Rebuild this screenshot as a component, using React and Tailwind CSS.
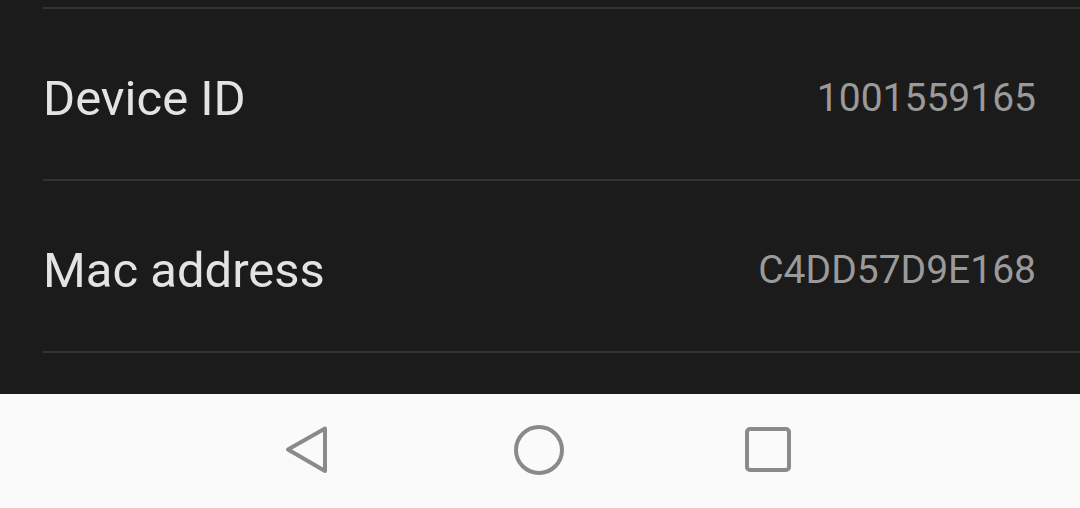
import React from "react";

const rows = [
  { label: "Device ID", value: "1001559165" },
  { label: "Mac address", value: "C4DD57D9E168" },
];

function NavBar() {
  return (
    <div className="h-[114px] bg-[#fafafa] flex items-center justify-center">
      {/* back / home / recents */}
      <div className="flex items-center -mt-[2px] pr-[4px]">
        <svg className="mr-[185px]" width="44" height="50" viewBox="0 0 44 50" fill="none">
          <path
            d="M3 24.5 L40 3.5 L40 46 Z"
            stroke="#8a8a8a"
            strokeWidth="4"
            strokeLinejoin="round"
          />
        </svg>
        <svg className="mr-[181px]" width="50" height="50" viewBox="0 0 50 50" fill="none">
          <circle cx="25" cy="25" r="23" stroke="#8a8a8a" strokeWidth="4" />
        </svg>
        <svg width="46" height="46" viewBox="0 0 46 46" fill="none">
          <rect x="2" y="2" width="42" height="41" rx="3" stroke="#8a8a8a" strokeWidth="4" />
        </svg>
      </div>
    </div>
  );
}

export default function App() {
  return (
    <div className="w-[1080px] h-[508px] overflow-hidden flex flex-col font-['Roboto',sans-serif]">
      <div className="h-[394px] bg-[#1b1b1b] pt-[7px] pl-[43px]">
        {rows.map((row) => (
          <div
            key={row.label}
            className="h-[172px] border-t-2 border-[#323232] flex items-center justify-between pr-[44px]"
          >
            <span className="text-[49px] leading-none text-[#e3e3e3] pt-[8px]">{row.label}</span>
            <span className="text-[39px] leading-none text-[#9a9a9a] pt-[8px]">{row.value}</span>
          </div>
        ))}
        <div className="border-t-2 border-[#323232]" />
      </div>
      <NavBar />
    </div>
  );
}
